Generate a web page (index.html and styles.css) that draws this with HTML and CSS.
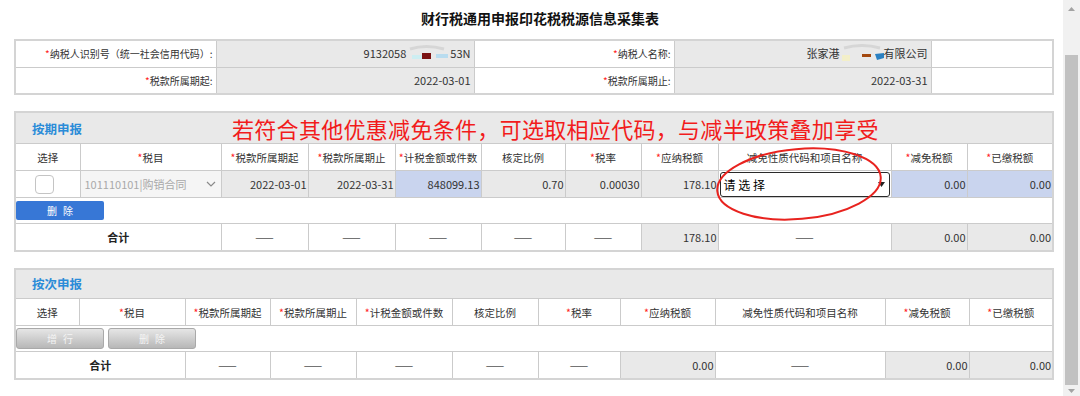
FILE: index.html
```html
<!DOCTYPE html>
<html lang="zh-CN">
<head>
<meta charset="utf-8">
<title>财行税通用申报印花税税源信息采集表</title>
<link rel="stylesheet" href="styles.css">
</head>
<body>
<div class="window">
  <main class="page">
    <h1 class="title">财行税通用申报印花税税源信息采集表</h1>

    <table class="info">
      <colgroup><col style="width:201px"><col style="width:258px"><col style="width:200px"><col style="width:257px"><col style="width:122px"></colgroup>
      <tr>
        <td class="lbl"><span class="req">*</span>纳税人识别号（统一社会信用代码）:</td>
        <td class="val">9132058<svg class="smudge" width="44" height="18" viewBox="0 0 44 18"><path d="M4 5 Q20 0 38 5" stroke="#d6d6d6" stroke-width="3" fill="none"/><rect x="6" y="11" width="12" height="4" fill="#cdeef2"/><rect x="16" y="9" width="9" height="6" fill="#7a1212"/><rect x="30" y="10" width="12" height="4" fill="#b9dcef"/></svg>53N</td>
        <td class="lbl"><span class="req">*</span>纳税人名称:</td>
        <td class="val">张家港<svg class="smudge" width="44" height="18" viewBox="0 0 44 18"><path d="M4 4 Q22 -1 40 4" stroke="#d6d6d6" stroke-width="3" fill="none"/><rect x="2" y="11" width="8" height="6" fill="#f3efc9"/><rect x="22" y="10" width="9" height="3" fill="#a3480f"/><path d="M35 10 L44 9 L44 14 L37 16 Z" fill="#2a80c2"/></svg>有限公司</td>
        <td></td>
      </tr>
      <tr>
        <td class="lbl"><span class="req">*</span>税款所属期起:</td>
        <td class="val">2022-03-01</td>
        <td class="lbl"><span class="req">*</span>税款所属期止:</td>
        <td class="val">2022-03-31</td>
        <td></td>
      </tr>
    </table>

    <section class="sect">
      <table class="grid">
        <colgroup><col style="width:65px"><col style="width:141px"><col style="width:87px"><col style="width:87px"><col style="width:86px"><col style="width:84px"><col style="width:76px"><col style="width:77px"><col style="width:173px"><col style="width:76px"><col style="width:86px"></colgroup>
        <tr class="band"><td colspan="11"><div class="band-in"><span class="sect-name">按期申报</span><span class="note">若符合其他优惠减免条件<span class="punct">，</span>可选取相应代码<span class="punct">，</span>与减半政策叠加享受</span></div></td></tr>
        <tr class="head">
          <th>选择</th><th><span class="req">*</span>税目</th><th><span class="req">*</span>税款所属期起</th><th><span class="req">*</span>税款所属期止</th><th><span class="req">*</span>计税金额或件数</th><th>核定比例</th><th><span class="req">*</span>税率</th><th><span class="req">*</span>应纳税额</th><th>减免性质代码和项目名称</th><th><span class="req">*</span>减免税额</th><th><span class="req">*</span>已缴税额</th>
        </tr>
        <tr class="data">
          <td class="c"><span class="chk"></span></td>
          <td class="dis"><div class="dis-in"><span>101110101|购销合同</span><svg width="10" height="6" viewBox="0 0 10 6"><polyline points="1,1 5,5 9,1" fill="none" stroke="#8a8a8a" stroke-width="1.2"/></svg></div></td>
          <td class="g">2022-03-01</td>
          <td class="g">2022-03-31</td>
          <td class="b">848099.13</td>
          <td class="g">0.70</td>
          <td class="g">0.00030</td>
          <td class="g">178.10</td>
          <td class="selcell"><div class="sel"><span>请 选 择</span><svg width="7" height="5" viewBox="0 0 7 5"><path d="M0 0 H7 L3.5 5 Z" fill="#222"/></svg></div></td>
          <td class="b">0.00</td>
          <td class="b">0.00</td>
        </tr>
        <tr class="btnrow"><td colspan="11"><span class="btn btn-blue">删除</span></td></tr>
        <tr class="total">
          <td colspan="2" class="tot">合计</td>
          <td class="dash">——</td><td class="dash">——</td><td class="dash">——</td><td class="dash">——</td><td class="dash">——</td>
          <td class="g">178.10</td>
          <td class="dash">——</td>
          <td class="g">0.00</td>
          <td class="g">0.00</td>
        </tr>
      </table>
      <svg class="ellipse" width="200" height="100" viewBox="0 0 200 100"><ellipse cx="99" cy="49" rx="82" ry="35" transform="rotate(-5 99 49)" fill="none" stroke="#e8231f" stroke-width="2"/></svg>
    </section>

    <section class="sect">
      <table class="grid">
        <colgroup><col style="width:64px"><col style="width:106px"><col style="width:85px"><col style="width:86px"><col style="width:96px"><col style="width:86px"><col style="width:82px"><col style="width:95px"><col style="width:170px"><col style="width:84px"><col style="width:84px"></colgroup>
        <tr class="band"><td colspan="11"><div class="band-in"><span class="sect-name">按次申报</span></div></td></tr>
        <tr class="head">
          <th>选择</th><th><span class="req">*</span>税目</th><th><span class="req">*</span>税款所属期起</th><th><span class="req">*</span>税款所属期止</th><th><span class="req">*</span>计税金额或件数</th><th>核定比例</th><th><span class="req">*</span>税率</th><th><span class="req">*</span>应纳税额</th><th>减免性质代码和项目名称</th><th><span class="req">*</span>减免税额</th><th><span class="req">*</span>已缴税额</th>
        </tr>
        <tr class="btnrow"><td colspan="11"><span class="btn btn-gray">增行</span><span class="btn btn-gray">删除</span></td></tr>
        <tr class="total">
          <td colspan="2" class="tot">合计</td>
          <td class="dash">——</td><td class="dash">——</td><td class="dash">——</td><td class="dash">——</td><td class="dash">——</td>
          <td class="g">0.00</td>
          <td class="dash">——</td>
          <td class="g">0.00</td>
          <td class="g">0.00</td>
        </tr>
      </table>
    </section>
  </main>

  <div class="scrollbar">
    <div class="sb-btn"><svg width="7" height="4" viewBox="0 0 7 4"><path d="M0 4 L3.5 0 L7 4 Z" fill="#a3a3a3"/></svg></div>
    <div class="thumb"></div>
    <div class="sb-btn sb-down"><svg width="7" height="4" viewBox="0 0 7 4"><path d="M0 0 L7 0 L3.5 4 Z" fill="#a3a3a3"/></svg></div>
  </div>
</div>
</body>
</html>
```

FILE: styles.css
```css
* { box-sizing: border-box; }

body {
  margin: 0;
  background: #fff;
  color: #333;
  font-family: "Noto Sans CJK SC", "Noto Sans", sans-serif;
}

.window {
  display: flex;
  height: 396px;
  overflow: hidden;
}

.page {
  flex: 1;
  position: relative;
  padding-left: 14px;
}

.title {
  margin: 0;
  height: 39px;
  line-height: 36px;
  padding-left: 3px;
  font-size: 14px;
  font-weight: bold;
  text-align: center;
  color: #111;
}

.req { color: #f22; }

/* top info table */
.info {
  width: 1038px;
  table-layout: fixed;
  border-collapse: collapse;
  border: 2px solid #d4d4d4;
  font-size: 10px;
}
.info td {
  height: 27px;
  padding: 0 3px;
  border: 1px solid #cbcbcb;
  text-align: right;
  white-space: nowrap;
}
.info .val {
  background: #e9e9e9;
  font-size: 11px;
  color: #333;
}
.smudge { vertical-align: middle; margin: -4px 0 0; }

/* sections */
.sect {
  margin-top: 16px;
  position: relative;
}
.grid {
  width: 1038px;
  table-layout: fixed;
  border-collapse: collapse;
  border: 2px solid #d4d4d4;
  font-size: 10.5px;
}
.grid td, .grid th {
  height: 27px;
  padding: 0 1px;
  border: 1px solid #cbcbcb;
  white-space: nowrap;
}
.band td {
  height: 30px;
  background: #e9e9e9;
  padding: 0 0 0 16px;
}
.band-in {
  display: flex;
  align-items: center;
}
.sect-name {
  color: #2b8cd8;
  font-size: 12.5px;
  font-weight: bold;
}
.note {
  margin-left: 150px;
  color: #f21c1c;
  font-size: 22px;
  letter-spacing: 0.3px;
  line-height: 30px;
}
.punct { font-family: "Noto Sans CJK TC", "Noto Sans CJK SC", sans-serif; }

.head th {
  font-weight: normal;
  text-align: center;
  color: #333;
  background: #fff;
}

.data td { text-align: right; font-size: 11px; }
.data td.c { text-align: center; padding-right: 8px; }
.g { background: #e9e9e9; text-align: right; font-size: 11px; }
.b { background: #c9d4ee; }

.chk {
  display: inline-block;
  width: 19px;
  height: 19px;
  border: 1px solid #c4c4c4;
  border-radius: 4px;
  background: #fff;
  vertical-align: middle;
}

.data td.dis { background: #f5f5f5; padding: 0; }
.dis-in {
  display: flex;
  align-items: center;
  justify-content: space-between;
  padding: 0 5px 0 4px;
  color: #a9a9a9;
  font-size: 11px;
}

.data td.selcell { padding: 0 1px; text-align: left; }
.sel {
  display: flex;
  align-items: center;
  justify-content: space-between;
  height: 25px;
  padding: 0 4px 0 3px;
  border: 1px solid #2a2a2a;
  border-radius: 3px;
  background: #fff;
  color: #000;
  font-size: 12px;
}

.btnrow td {
  height: 26px;
  padding: 0;
  text-align: left;
}
.btn {
  display: inline-block;
  width: 88px;
  height: 19px;
  line-height: 19px;
  text-align: center;
  font-size: 10px;
  letter-spacing: 6px;
  text-indent: 6px;
  vertical-align: middle;
}
.btn-blue {
  background: #3777d6;
  color: #fff;
  border-radius: 2px;
}
.btn-gray {
  height: 21px;
  line-height: 19px;
  margin-right: 4px;
  border: 1px solid #a9a9a9;
  border-radius: 3px;
  background: linear-gradient(#e6e6e6, #b7b7b7);
  color: #f4f4f4;
}

.total td { font-size: 11px; }
.tot { text-align: center; font-weight: bold; color: #222; }
.dash { text-align: center; color: #555; background: #fff; }

.ellipse {
  position: absolute;
  left: 686px;
  top: 24px;
}

/* scrollbar */
.scrollbar {
  width: 17px;
  background: #f1f1f1;
  display: flex;
  flex-direction: column;
  align-items: center;
}
.sb-btn {
  height: 17px;
  display: flex;
  align-items: center;
  justify-content: center;
}
.thumb {
  margin-top: 38px;
  width: 13px;
  height: 330px;
  background: #c1c1c1;
}
.sb-down { margin-top: auto; height: 11px; }
```
